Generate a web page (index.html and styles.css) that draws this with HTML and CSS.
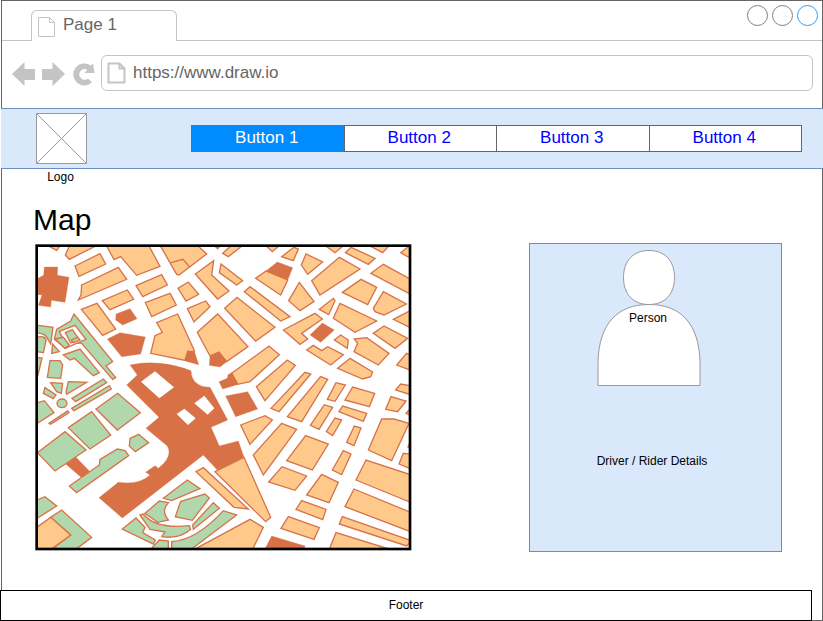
FILE: index.html
```html
<!DOCTYPE html>
<html lang="en">
<head>
<meta charset="utf-8">
<title>Page 1</title>
<link rel="stylesheet" href="styles.css">
</head>
<body>
<div class="window">
  <header class="tabbar">
    <div class="tab">
      <svg class="tab-icon" viewBox="0 0 17 20" width="17" height="20"><path d="M.5 .5H11.5L16.5 5.500V19.500H.5ZM11.500 .5V5.500H16.500"/></svg>
      <span>Page 1</span>
    </div>
    <div class="controls">
      <button class="dot" aria-label="Minimize"></button>
      <button class="dot" aria-label="Maximize"></button>
      <button class="dot dot-close" aria-label="Close"></button>
    </div>
  </header>

  <div class="toolbar">
    <button class="tool" aria-label="Back"><svg viewBox="0 0 24 26" width="24" height="26"><path d="M0 14 12.500 2V9H23V20H12.500V26Z"/></svg></button>
    <button class="tool" aria-label="Forward"><svg viewBox="0 0 24 26" width="24" height="26"><path d="M23 14 10.500 2V9H0V20H10.500V26Z"/></svg></button>
    <button class="tool" aria-label="Reload"><svg viewBox="0 0 24 26" width="24" height="26"><path d="M18.700 5.500 21 3.500 22.500 13H12.500L15.300 9.800A5.300 5.300 0 1 0 16 18.500L20 22.200A11 11 0 1 1 18.700 5.500Z"/></svg></button>
    <label class="address">
      <svg class="address-icon" viewBox="0 0 19 22" width="19" height="22"><path d="M1.500 1.500H12.500L17.500 6.500V20.500H1.500ZM12.500 1.500V6.500H17.500"/></svg>
      <input type="text" aria-label="Address" value="https://www.draw.io">
    </label>
  </div>

  <nav class="nav">
    <figure class="logo">
      <svg viewBox="0 0 51 51" width="51" height="51"><path d="M.5 .5H50.500V50.500H.5ZL50.500 50.500M50.500 .5L.5 50.500"/></svg>
      <figcaption>Logo</figcaption>
    </figure>
    <div class="buttons">
      <button class="active">Button 1</button>
      <button>Button 2</button>
      <button>Button 3</button>
      <button>Button 4</button>
    </div>
  </nav>

  <main class="main">
    <h1>Map</h1>
    <div class="content">
      <svg class="map" viewBox="15 12 1131 921" role="img" aria-label="City map">
        <defs><clipPath id="frame"><rect x="20" y="17" width="1120" height="910"/></clipPath></defs>
        <rect class="paper" x="20" y="17" width="1120" height="910"/>
        <g clip-path="url(#frame)">
          <g class="block">
            <path d="M48 14 80 31 92 14ZM106 45 120 14H205L118 58ZM135 78 210 41 227 72 147 109ZM155 135 265 82 290 118 145 180 153 165Z"/>
            <path d="M228 14 252 59 272 50 320 106 390 79 355 14ZM318 137 395 104 412 135 338 170ZM217 182 292 150 311 178 240 209Z"/>
            <path d="M154 208 201 190 257 267 218 286ZM346 188 420 160 439 195 365 230Z"/>
          </g>
          <g transform="translate(375 0)">
            <g class="block">
              <path d="M14 14 65 103 72 105 155 42 125 14ZM5 248 68 222 118 332 113 362 85 360-13 340 0 287 22 277Z"/>
              <path d="M48 68 84 58 103 80"/>
              <path d="M69 145 100 126 131 163 93 183ZM97 206 152 183 165 200 117 246ZM121 102 176 62 170 105 222 153 188 177ZM198 72 263 122 245 135 193 98Z"/>
              <path d="M203 40 232 14H266L220 50ZM176 14 188 26 198 14ZM268 155 285 140 405 230 377 243ZM209 205 246 172 360 262 302 303Z"/>
              <path d="M302 115 333 93 398 120 377 165ZM330 14 352 35 376 14ZM127 277 188 222 279 320 215 365 192 336 165 348Z"/>
            </g>
            <path class="landmark" d="M333 93 367 66 413 83 398 120Z"/>
          </g>
          <g transform="translate(750 0)">
            <g class="block">
              <path d="M5 50 42 22 55 27 40 62ZM64 75 78 42 128 66 83 103ZM95 122 178 52 240 87 120 165ZM26 182 58 127 102 185 60 212Z"/>
              <path d="M132 14 165 38 194 14ZM196 38 213 22 285 55 265 73ZM262 14 308 38 330 14ZM362 38 392 14V55ZM273 100 310 73 395 120V165Z"/>
              <path d="M187 157 243 118 290 142 263 194ZM280 205 310 155 379 192 312 225 285 215ZM340 238 395 210V265ZM118 208 160 175 165 182 146 224Z"/>
              <path d="M160 235 180 190 290 243 225 277ZM10 270 105 220 127 237 65 280 83 297 60 313ZM163 300 182 285 205 300 202 325Z"/>
              <path d="M223 297 260 293 327 340 295 375 222 335 233 310ZM280 280 312 258 383 295 345 325Z"/>
            </g>
            <path class="landmark" d="M90 285 127 249 163 270 122 307Z"/>
          </g>
          <g class="landmark">
            <path d="M43 81H83L82 106 117 112 105 187 64 181 62 201 25 196 36 165 18 163V118L41 106ZM258 222 300 206 321 236 278 255 257 240ZM232 297 270 278 346 291 332 342 275 350Z"/>
          </g>
          <g class="park">
            <path d="M16 255 69 262 62 312 55 300Q45 275 16 280ZM16 292Q46 285 48 302L40 338 16 334Z"/>
            <path d="M80 268 122 243 132 222 248 365 228 378 257 413 248 418 155 310 130 308 118 315 108 325 73 298Z"/>
            <path class="paper" d="M88 274 135 256 168 298 112 322Z"/>
            <path d="M106 278 127 269 148 299 122 309Z"/>
          </g>
          <g class="park" transform="translate(0 300)">
            <path d="M16 52 36 54 24 105H16ZM65 40 68 12 88 35ZM75-3 105 25 118 15 100-8ZM124 0 130 8 150 0 143-8ZM100 45 150 27 208 98 190 107 133 55 120 60Z"/>
            <path d="M60 62H90L98 75 92 115 52 112ZM62 128 98 130 94 160 80 155ZM115 125 170 127 110 163 108 157ZM45 143 78 165 70 176 40 160Z"/>
            <ellipse cx="96" cy="190" rx="15" ry="13"/>
            <path d="M126 175 220 117 230 128 137 185ZM125 205 238 137 244 147 132 212ZM57 250 113 213 117 218 62 253ZM16 190 43 182 72 218 16 254Z"/>
            <path d="M198 207 263 160 331 218 262 270ZM115 263 185 215 242 285 180 327ZM22 338 105 275 168 330 75 393ZM300 295 326 283 356 308 316 335 298 318Z"/>
          </g>
          <g transform="translate(0 300)">
            <path class="landmark" d="M300 75Q345 65 390 70 440 75 483 92 485 140 540 142L593 240 543 262 568 318 625 303 642 352 562 390 520 345 277 534 207 473 265 427Q330 435 360 405L347 397 375 377 385 385Q430 350 412 318L348 265 387 232 290 135 322 105Z"/>
            <path class="landmark" d="M107 372 138 352 180 395 155 413Z"/>
            <path class="void" d="M333 125 375 94 432 142 388 175ZM493 190 523 167 553 205 533 224ZM440 222 463 206 497 235 474 255Z"/>
          </g>
          <g transform="translate(375 300)">
            <g class="block">
              <path d="M230 100 342 18 373 44 285 125 248 133ZM304 140 397 60 421 76 330 182ZM348 205 450 97 467 102 372 215ZM257 255 330 227 352 240 285 313Z"/>
            </g>
            <path class="landmark" d="M97 32 118 34 131 74 88 62ZM165 48 192 36 215 65 195 81 163 76ZM192 125 217 115 219 104 230 98 250 133 203 147ZM212 168 278 155 308 207 242 230Z"/>
          </g>
          <g class="block" transform="translate(750 300)">
            <path d="M80 30 100 16 125 32 143 20 190 44 152 75ZM173 85 210 55 278 96 272 110 248 117ZM350 75 380 40 395 45V92ZM347 150 362 132 395 138V165ZM317 208 333 170 378 183 353 215ZM378 220 390 207V225Z"/>
            <path d="M22 230 122 110 143 118 65 245ZM142 178 168 128 196 135 165 184ZM195 180 218 141 284 160 268 200ZM177 215 188 198 260 220 250 244ZM91 256 133 194 158 202 117 268Z"/>
            <path d="M139 275 165 234 185 240 158 287ZM200 307 223 258 243 264 222 317ZM-80 345 5 250 50 268-50 405ZM20 362 77 287 145 312 97 390ZM265 330 305 237H342L387 250 335 362Z"/>
          </g>
          <g transform="translate(0 600)">
            <g class="park">
              <path d="M118 138 208 75 210 58 262 27 285 32 296 47 140 158ZM16 182 45 170 80 198 16 238ZM62 232 95 210 185 292 132 332H60L122 285Z"/>
              <path d="M400 175 472 120 510 146 425 182ZM345 220 388 183 415 188Q392 212 415 240L383 247ZM452 184 525 162 538 174 487 241 436 230ZM488 255 550 188 568 205 490 268Z"/>
              <path d="M330 225 340 222Q375 268 478 257L482 268Q450 298 395 290L405 276 360 268ZM277 267 318 234 345 262 338 278 376 300 370 312ZM358 332 388 300 415 303V332ZM425 332V305Q500 300 580 212L620 225 478 332Z"/>
            </g>
            <g class="block">
              <path d="M16 265 62 232 122 285 58 332H16ZM498 95 520 83 655 207 612 202ZM555 95 642 52 722 232 707 245ZM486 332 660 238 700 262 666 332Z"/>
            </g>
          </g>
          <g transform="translate(540 600)">
            <g class="block">
              <path d="M567 72 580 40 604 43V87ZM438 120 468 60 604 105V188ZM405 200 432 147 604 218V276ZM388 252 397 230 604 302 590 318ZM356 332 378 278 540 328V336Z"/>
              <path d="M176 126 216 80 290 108 255 151ZM290 165 335 103 385 127 357 188ZM258 208 275 182 348 208 338 239ZM213 265 235 230 328 263 312 298ZM367 90 400 32 423 42 395 104Z"/>
            </g>
            <path class="landmark" d="M163 330 185 288 285 318 283 332ZM592 22 600 5V25Z"/>
          </g>
        </g>
        <rect class="map-frame" x="20" y="17" width="1120" height="910"/>
      </svg>

      <section class="card">
        <svg class="person" viewBox="0 0 104 137" width="104" height="137" role="img">
          <path d="M52 .5C68 .5 77.500 11 77.500 27.500S68 54.500 52 54.500 26.500 44 26.500 27.500 36 .5 52 .5Z"/>
          <path d="M1 135.500V112C2 74 20 54.500 52 54.500S102 74 103 112V135.500Z"/>
          <text x="51" y="72">Person</text>
        </svg>
        <p>Driver / Rider Details</p>
      </section>
    </div>
  </main>

  <footer class="footer">Footer</footer>
</div>
</body>
</html>
```
FILE: styles.css
```css
* { box-sizing: border-box; }

body {
  margin: 0;
  background: #fff;
  color: #000;
  font: 12px/16px "Liberation Sans", Arial, sans-serif;
}

button, input { font: inherit; }

svg { display: block; flex: none; }

.window {
  display: flex;
  flex-direction: column;
  min-height: 100vh;
  margin-left: 1px;
  border: 1px solid #666;
}

/* Browser chrome */
.tabbar {
  display: flex;
  justify-content: space-between;
  height: 40px;
  padding: 9px 4px 0 29px;
  border-bottom: 1px solid #c4c4c4;
}

.tab {
  display: flex;
  align-items: flex-start;
  gap: 8px;
  width: 146px;
  height: 31px;
  padding: 6px;
  border: 1px solid #c4c4c4;
  border-bottom: 0;
  border-radius: 6px 6px 0 0;
  background: #fff;
  color: #666;
  font-size: 17px;
}

.tab-icon, .address-icon {
  fill: none;
  stroke: #c4c4c4;
}

.address-icon { stroke-width: 2; }

.controls {
  display: flex;
  gap: 4px;
  margin-top: -5px;
}

.dot {
  width: 21px;
  height: 21px;
  padding: 0;
  border: 1px solid #808080;
  border-radius: 50%;
  background: #fff;
}

.dot-close { border-color: #3399f3; }

.toolbar {
  display: flex;
  align-items: center;
  gap: 6px;
  padding: 14px 9px 17px 10px;
}

.tool {
  padding: 0;
  border: 0;
  background: none;
  fill: #c4c4c4;
}

.address {
  display: flex;
  flex: 1;
  align-items: center;
  gap: 7px;
  height: 36px;
  margin-left: -1px;
  padding: 0 5px;
  border: 1px solid #c4c4c4;
  border-radius: 6px;
}

.address input {
  flex: 1;
  min-width: 0;
  padding: 0;
  border: 0;
  outline: 0;
  background: none;
  color: #666;
  font-size: 17px;
}

/* Navigation band */
.nav {
  display: flex;
  align-items: flex-start;
  gap: 104px;
  height: 61px;
  margin: 0 -1px;
  padding: 4px 21px 0 35px;
  border: 1px solid #6c8ebf;
  border-width: 1px 0;
  background: #dae8fc;
}

.logo {
  flex: none;
  width: 51px;
  margin: 0;
  text-align: center;
}

.logo svg {
  fill: #fff;
  stroke: #999;
}

.logo figcaption {
  margin-top: 5px;
  margin-right: 2px;
}

.buttons {
  display: flex;
  flex: 1;
  margin-top: 12px;
}

.buttons button {
  flex: 1;
  height: 27px;
  margin-left: -1px;
  padding: 0 2px 2px 0;
  border: 1px solid #666;
  background: #fff;
  color: #00f;
  font-size: 17px;
}

.buttons .active {
  margin-left: 0;
  border-color: #008cff;
  background: #008cff;
  color: #fff;
}

/* Page content */
.main { padding: 32px 40px 38px 31px; }

h1 {
  margin: 0 0 4px;
  font-size: 30px;
  font-weight: 400;
  line-height: 38px;
}

.content {
  display: grid;
  grid-template-columns: 377fr 253fr;
  gap: 117px;
  padding-left: 2px;
}

.map {
  width: 100%;
  margin: 1px 0;
}

.paper { fill: #fff; }

.block, .park, .landmark { stroke: #d6734a; stroke-width: 4; }
.block { fill: #ffc98b; }
.park { fill: #b1d8ac; }
.landmark { fill: #d87146; stroke-width: 1; }
.void { fill: #fff; }

.map-frame {
  fill: none;
  stroke: #000;
  stroke-width: 8;
}

.card {
  display: flex;
  flex-direction: column;
  align-items: center;
  padding: 6px 7px 0 0;
  border: 1px solid #6c8ebf;
  background: #dae8fc;
}

.person {
  margin-right: 6px;
  fill: #fff;
  stroke: #999;
}

.person text {
  fill: #000;
  stroke: none;
  text-anchor: middle;
}

.card p { margin: 66px 0 0; }

.footer {
  margin: auto 10px -1px -2px;
  padding: 6px 0 7px;
  border: 1px solid #000;
  background: #fff;
  text-align: center;
}
```
